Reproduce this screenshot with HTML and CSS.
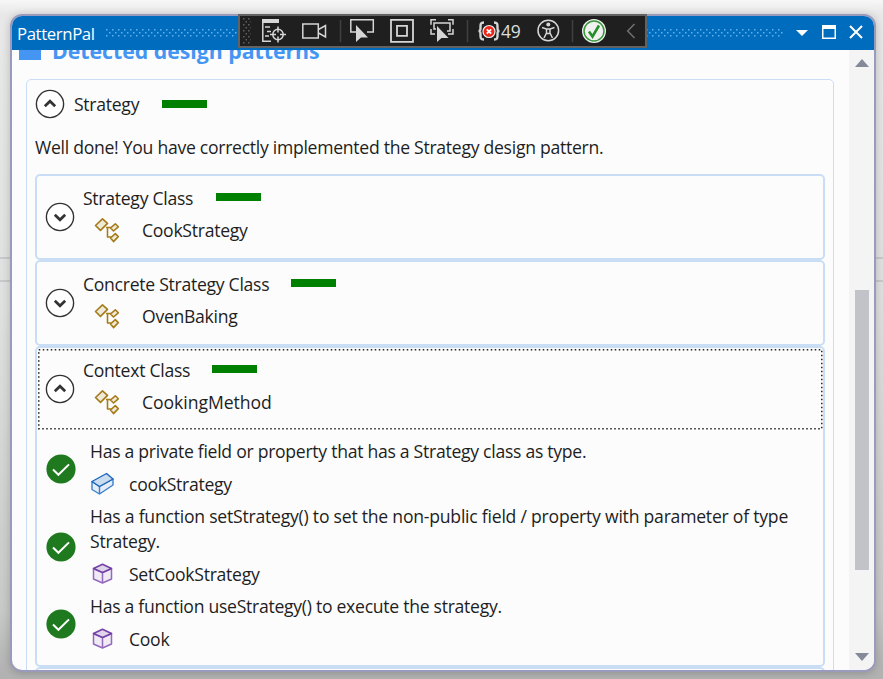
FILE: index.html
```
<!DOCTYPE html>
<html lang="en">
<head>
<meta charset="utf-8">
<title>PatternPal</title>
<link rel="stylesheet" href="styles.css">
</head>
<body>
<svg class="defs" width="0" height="0">
  <symbol id="up" viewBox="0 0 30 30"><circle cx="15" cy="15" r="13.6" fill="#fff" stroke="#333" stroke-width="1.4"/><path d="M9.8 17.2 15 12.2l5.2 5" fill="none" stroke="#333" stroke-width="2.7"/></symbol>
  <symbol id="down" viewBox="0 0 30 30"><circle cx="15" cy="15" r="13.6" fill="#fff" stroke="#333" stroke-width="1.4"/><path d="M9.8 12.8 15 17.8l5.2-5" fill="none" stroke="#333" stroke-width="2.7"/></symbol>
  <symbol id="class" viewBox="0 0 26 26"><g fill="#efe9da" stroke="#a67c1a" stroke-width="1.6" stroke-linejoin="round"><path d="M12 10.500h6M13.500 10.500v9.500h4" fill="none"/><path d="m1.500 8.500 7-6.700 5 4.600-7 7z"/><path d="m16.500 11 4.800-4.200 3 3-4.800 4.200zM16.500 21l4.800-4.400 3 3-4.800 5z"/></g></symbol>
  <symbol id="ok" viewBox="0 0 30 30"><circle cx="15" cy="15" r="14.600" fill="#1f7a1f"/><path d="m7 15.500 5.400 5.300L23 10.400" fill="none" stroke="#fff" stroke-width="2"/></symbol>
  <symbol id="field" viewBox="0 0 24 24"><g fill="#e6edf6" stroke="#3980cc" stroke-width="1.400" stroke-linejoin="round"><path d="m2 9.500 7.500 5L23 7v6L9.500 22 2 17.500z"/><path d="M9.500 14.500V22" fill="none"/><path d="M2 9.500 16.500 1.500 23 7 9.500 14.500z" fill="#ccdcef" stroke="#1766bd"/></g></symbol>
  <symbol id="cube" viewBox="0 0 24 24"><g fill="#f0eaf5" stroke="#9369bd" stroke-width="1.500" stroke-linejoin="round"><path d="M3.500 6.500v10.500l9 4 9-4V6.500l-9 4z"/><path d="M12.500 10.500V21" fill="none"/><path d="m3.500 6.500 9-4.200 9 4.200-9 4z" fill="#dfd4ea" stroke="#7440a7"/></g></symbol>
</svg>
<div class="behind"></div>
<main class="window">
  <header class="titlebar">
    <span class="title">PatternPal</span>
    <svg class="grip"><defs><pattern id="dots" width="6" height="8" patternUnits="userSpaceOnUse"><path d="M1 0h1.500v1.500H1zM4 3h1.500v1.500H4zM1 6h1.500v1.500H1z" fill="#63b1ec"/></pattern></defs><rect width="100%" height="8" fill="url(#dots)"/></svg>
    <svg class="winbtns" width="72" height="20"><path d="M2 7h12l-6 6z" fill="#fff"/><path d="M28 2h14v14H28zM29.500 6v8.500h11V6z" fill="#fff" fill-rule="evenodd"/><path d="m56 3 12 12M68 3 56 15" stroke="#fff" stroke-width="2"/></svg>
  </header>
  <div class="body">
    <section class="view">
      <h1><i class="square"></i><span>Detected design patterns</span></h1>
      <article class="card">
        <div class="cardhead"><svg class="toggle"><use href="#up"/></svg><span class="t1">Strategy</span><i class="bar"></i></div>
        <p class="done"><span>Well done! You have correctly implemented the Strategy design pattern.</span></p>
        <div class="item"><svg class="toggle"><use href="#down"/></svg><div><div class="name"><span>Strategy Class</span><i class="bar"></i></div><div class="sub"><svg><use href="#class"/></svg><span>CookStrategy</span></div></div></div>
        <div class="item"><svg class="toggle"><use href="#down"/></svg><div><div class="name n2"><span>Concrete Strategy Class</span><i class="bar"></i></div><div class="sub"><svg><use href="#class"/></svg><span>OvenBaking</span></div></div></div>
        <div class="item open">
          <svg class="focus" width="786" height="82"><rect x=".75" y=".75" width="783" height="79" fill="none" stroke="#222" stroke-width="1.500" stroke-dasharray="1.500 2.500"/></svg>
          <div class="row"><svg class="toggle"><use href="#up"/></svg><div><div class="name n3"><span>Context Class</span><i class="bar"></i></div><div class="sub"><svg><use href="#class"/></svg><span class="wide">CookingMethod</span></div></div></div>
          <div class="checks">
            <div class="check"><svg class="ok"><use href="#ok"/></svg><div><p>Has a private field or property that has a Strategy class as type.</p><div class="member"><svg><use href="#field"/></svg><span>cookStrategy</span></div></div></div>
            <div class="check"><svg class="ok"><use href="#ok"/></svg><div><p class="long">Has a function setStrategy() to set the non-public field / property with parameter of type<br>Strategy.</p><div class="member"><svg><use href="#cube"/></svg><span>SetCookStrategy</span></div></div></div>
            <div class="check"><svg class="ok"><use href="#ok"/></svg><div><p>Has a function useStrategy() to execute the strategy.</p><div class="member"><svg><use href="#cube"/></svg><span>Cook</span></div></div></div>
          </div>
        </div>
        <div class="item"></div>
      </article>
    </section>
    <aside class="scroll"><svg width="14" height="8"><path d="M0 8h14L7 0z" fill="#858999"/></svg><i class="thumb"></i><svg width="14" height="8"><path d="M0 0h14L7 8z" fill="#858999"/></svg></aside>
  </div>
</main>
<div class="toolbar">
  <svg width="406" height="30" viewBox="240 16 406 30" fill="none" stroke="#d6d6d6" stroke-width="1.500">
    <defs><pattern id="grab" x="243" y="18" width="5" height="6" patternUnits="userSpaceOnUse"><path d="M0 0h1.500v1.500H0zM2.500 3H4v1.500H2.500z" fill="#606060" stroke="none"/></pattern></defs>
    <rect x="243" y="18" width="8" height="26" fill="url(#grab)" stroke="none"/>
    <path d="M262 19h17v4h-17z" fill="#d6d6d6" stroke="none"/><path d="M262.800 22v19.200H271M265 27h5M267 31.500h4M265 36h4"/><circle cx="278" cy="34.500" r="5.200"/><path d="M278 26.500v6M278 36.500v6M270 34.500h6M280 34.500h6"/>
    <path d="M302.800 24h15.500v14h-15.500zM318.500 29.500l7-4v11.500l-7-4"/>
    <path d="M340.500 20v22M467.500 20v22M572.500 20v22" stroke="#404040"/>
    <path d="M357 32h-6.200V19.800h22.500V32H367"/><path d="M356 25v17l5-4.500h7z" fill="#d6d6d6" stroke="none"/>
    <path d="M391 19.800h22v22h-22zM397 25.800h10v10h-10z" stroke-width="1.800"/>
    <path d="M436 19.800h-5v5M431 29v5h4M448 19.800h5v5M453 29v5h-5M436 29h-2v-6h16v8h-3"/><path d="M437 26v16l4.500-4h7z" fill="#d6d6d6" stroke="none"/>
    <path d="M484 22.500c-3.500 0-3.500 1.500-3.500 4.500s0 4-2 4c2 0 2 1 2 4s0 4.500 3.500 4.500M494 22.500c3.500 0 3.500 1.500 3.500 4.500s0 4 2 4c-2 0-2 1-2 4s0 4.500-3.500 4.500" stroke-width="2.400"/><circle cx="489" cy="31.500" r="6" fill="#ed2618" stroke="#eee" stroke-width="1.200"/><path d="m486.800 29.300 4.400 4.400m0-4.400-4.400 4.400" stroke="#fff" stroke-width="1.800"/>
    <circle cx="548.300" cy="30.500" r="10.300"/><circle cx="548.300" cy="24.500" r="2" fill="#d6d6d6" stroke="none"/><path d="m542 27.500 4.500 1.500v4l-2.500 5M554.500 27.500 550 29v4l2.500 5M546.500 29h4M546.500 33.500h4"/>
    <circle cx="594" cy="31" r="12" fill="#f1f1f1" stroke="none"/><circle cx="594" cy="31" r="10" stroke="#389938"/><path d="m589 31.500 3.500 5 6.500-11" stroke="#259027" stroke-width="2.600"/>
    <path d="m634.500 24-6.800 7 6.800 7" stroke="#707070"/>
  </svg>
  <span class="count">49</span>
</div>
</body>
</html>
```
FILE: styles.css
```
* { box-sizing: border-box; }
html, body { margin: 0; height: 100%; overflow: hidden; }
body { display: flex; padding: 14px 7px 7px 10px; font-family: "Open Sans", sans-serif; font-size: 17.600px; letter-spacing: -.28px; color: #1e1e1e; background: linear-gradient(#f7f7f7, #e8e8e8 14px, #e0e0e0 45%, #c8c8c8 90%, #b2b2b2 99%); }
i { display: block; }
svg { display: block; flex: none; }
.defs { position: absolute; }
.behind { position: absolute; inset: 257px 0 auto; height: 25px; border: solid #c9c9cc; border-width: 2px 0; }
.window { position: relative; width: 866px; height: 658px; border: 2px solid #9a9bbc; border-radius: 12px; background: #fcfcfc; overflow: hidden; box-shadow: 0 1px 9px #0003; }
.titlebar { display: flex; align-items: center; height: 34px; padding-left: 5px; background: #006cbe; color: #fff; }
.title { width: 88px; font-size: 16.800px; letter-spacing: -.4px; }
.grip { width: 678px; height: 8px; }
.winbtns { margin-left: 11px; }
.body { display: flex; height: 620px; }
.view { width: 837px; height: 620px; padding: 0 15px 0 14px; overflow: hidden; }
h1 { display: flex; align-items: center; gap: 11px; height: 29px; margin: -14px 0 14px -7px; color: #4596f3; font-size: 21.300px; letter-spacing: -.03px; line-height: 29px; }
.square { width: 22px; height: 22px; margin-top: -3px; background: #4596f3; }
.card { border: 1.500px solid #c9def5; border-radius: 5px; height: 640px; padding: 0 8px; }
.cardhead { display: flex; align-items: center; height: 47px; }
.toggle { width: 30px; height: 30px; }
.t1 { width: 88px; margin-left: 9px; padding-top: 1px; }
.bar { width: 45px; height: 8px; background: #008000; }
.done { margin: 0; height: 47px; line-height: 41px; }
.item { display: flex; align-items: center; height: 86px; border: 2px solid #c9def5; border-radius: 5px; padding-left: 8px; width: 790px; }
.item > div, .row > div { margin: -6px 0 0 8px; }
.name { display: flex; align-items: center; height: 32px; }
.name .bar { margin-top: -2px; }
.name span { width: 133px; white-space: nowrap; }
.n2 span { width: 208px; }
.n3 span { width: 129px; }
.sub { display: flex; align-items: center; height: 32px; padding-left: 11px; }
.sub svg { width: 26px; height: 26px; margin-right: 22px; }
.wide { letter-spacing: -.05px; }
.open { position: relative; display: block; height: 321px; }
.focus { position: absolute; left: 1px; top: 1px; }
.open .row { display: flex; align-items: center; height: 82px; margin: 0; }
.checks { margin: 9px 0 0 1px !important; }
.check { display: flex; align-items: center; }
.ok { width: 30px; height: 30px; margin-top: -5px; }
.check > div { margin-left: 14px; }
.check p { margin: 0; line-height: 25px; white-space: nowrap; }
.check .long { letter-spacing: -.23px; }
.member { display: flex; align-items: center; height: 40px; }
.member svg { width: 24px; height: 24px; margin-right: 15px; }
.scroll { display: flex; flex-direction: column; width: 25px; padding: 9px 0 9px 6px; background: #f4f4f4; }
.thumb { width: 14px; height: 280px; margin: 223px 0 83px; background: #c2c3c9; }
.toolbar { position: absolute; left: 238px; top: 14px; width: 409px; height: 34px; border: 2px solid #626262; background: #1f1f1f; }
.count { position: absolute; left: 261px; top: 3px; color: #ddd; font-size: 17.500px; line-height: 24px; }
```
